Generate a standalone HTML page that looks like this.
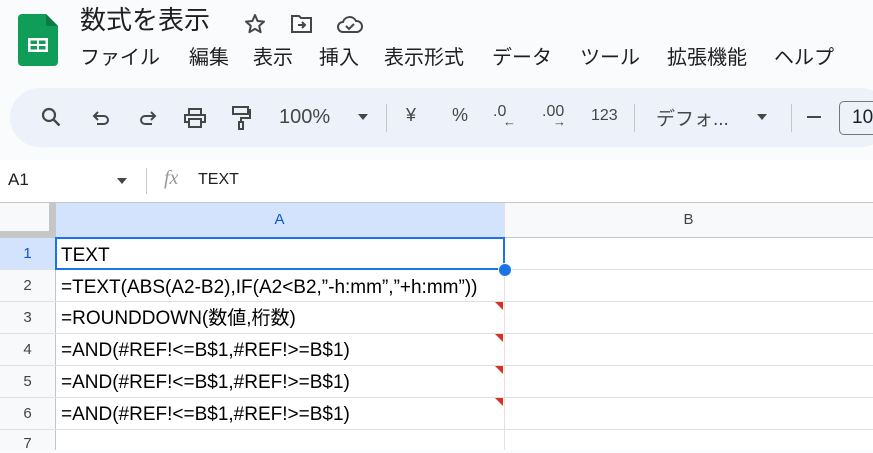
<!DOCTYPE html>
<html><head><meta charset="utf-8"><style>
*{margin:0;padding:0;box-sizing:border-box}
body{width:873px;height:450px;overflow:hidden;background:#f9fbfd;font-family:"Liberation Sans","Noto Sans CJK JP",sans-serif;position:relative;color:#1f1f1f}
.a{position:absolute;white-space:nowrap}
.title{left:80px;top:2px;font-size:26px;color:#1f1f1f;line-height:36px}
.menu{top:44px;font-size:20px;color:#1f1f1f;line-height:28px}
.tb{left:10px;top:88px;width:880px;height:59px;background:#edf2fa;border-radius:30px}
.ti{top:105px;font-size:19px;color:#444746}
.sep{width:1px;background:#c7c7c7;position:absolute}
.fb{left:0;top:160px;width:873px;height:42px;background:#fff}
.grid{left:0;top:202px;width:873px;height:248px;background:#fff}
.hl{position:absolute;background:#e1e1e1}
.cell{position:absolute;left:61px;font-size:19px;color:#000;line-height:24px}
.rn{position:absolute;width:55px;text-align:center;font-size:15px;color:#444;line-height:18px}
.tri{position:absolute;left:495px;width:0;height:0;border-top:8px solid #d93025;border-left:8px solid transparent}
</style></head><body>
<svg class="a" style="left:18px;top:14px" width="40" height="52" viewBox="0 0 40 52"><path d="M4 0h24l12 12v36a4 4 0 0 1-4 4H4a4 4 0 0 1-4-4V4a4 4 0 0 1 4-4z" fill="#0f9d58"/><path d="M28 0l12 12H30a2 2 0 0 1-2-2z" fill="#0b7a43"/><rect x="10" y="24" width="20" height="14" fill="#fff"/><rect x="12.5" y="26.5" width="6.5" height="3.5" fill="#0f9d58"/><rect x="21" y="26.5" width="6.5" height="3.5" fill="#0f9d58"/><rect x="12.5" y="32" width="6.5" height="3.5" fill="#0f9d58"/><rect x="21" y="32" width="6.5" height="3.5" fill="#0f9d58"/></svg>
<div class="a title">数式を表示</div>
<svg class="a" style="left:243px;top:12px" width="24" height="24" viewBox="0 0 24 24"><path d="M12 3l2.6 6 6.4.6-4.8 4.3 1.4 6.3L12 16.9 6.4 20.2l1.4-6.3L3 9.6l6.4-.6z" fill="none" stroke="#444746" stroke-width="2" stroke-linejoin="round"/></svg>
<svg class="a" style="left:289px;top:12px" width="26" height="24" viewBox="0 0 26 24"><path d="M3 4h7l2 2h10v14H3z" fill="none" stroke="#444746" stroke-width="2"/><path d="M9 13h7M13 10l3 3-3 3" fill="none" stroke="#444746" stroke-width="2"/></svg>
<svg class="a" style="left:336px;top:12px" width="28" height="24" viewBox="0 0 28 24"><path d="M7 20a5 5 0 0 1 0-10 7 7 0 0 1 13-1 5.5 5.5 0 0 1 1 11z" fill="none" stroke="#444746" stroke-width="2"/><path d="M10 14l3 3 5-5" fill="none" stroke="#444746" stroke-width="2"/></svg>
<div class="a menu" style="left:80px">ファイル</div>
<div class="a menu" style="left:189px">編集</div>
<div class="a menu" style="left:253px">表示</div>
<div class="a menu" style="left:319px">挿入</div>
<div class="a menu" style="left:384px">表示形式</div>
<div class="a menu" style="left:492px">データ</div>
<div class="a menu" style="left:580px">ツール</div>
<div class="a menu" style="left:667px">拡張機能</div>
<div class="a menu" style="left:774px">ヘルプ</div>
<div class="a tb"></div>
<svg class="a" style="left:40px;top:106px" width="24" height="24" viewBox="0 0 24 24"><circle cx="9" cy="9" r="6" fill="none" stroke="#444746" stroke-width="2.2"/><path d="M13.5 13.5l6 6" stroke="#444746" stroke-width="2.4"/></svg>
<svg class="a" style="left:90px;top:108px" width="22" height="22" viewBox="0 0 22 22"><path d="M5 8h9a4 4 0 0 1 0 8H7M8 4L4 8l4 4" fill="none" stroke="#444746" stroke-width="2"/></svg>
<svg class="a" style="left:137px;top:108px" width="22" height="22" viewBox="0 0 22 22"><path d="M17 8H8a4 4 0 0 0 0 8h7M14 4l4 4-4 4" fill="none" stroke="#444746" stroke-width="2"/></svg>
<svg class="a" style="left:182px;top:106px" width="26" height="24" viewBox="0 0 26 24"><path d="M7 8V3h12v5M7 16H3V9h20v7h-4M7 13h12v8H7z" fill="none" stroke="#444746" stroke-width="2"/></svg>
<svg class="a" style="left:229px;top:104px" width="24" height="28" viewBox="0 0 24 28"><path d="M4 3h15v7H4zM19 6h2v8h-9v4M10 18h4v7h-4z" fill="none" stroke="#444746" stroke-width="2"/></svg>
<div class="a ti" style="left:279px;top:106px;font-size:20px">100%</div>
<svg class="a" style="left:358px;top:114px" width="10" height="6"><path d="M0 0h10L5 6z" fill="#444746"/></svg>
<div class="sep" style="left:386px;top:104px;height:28px"></div>
<div class="a ti" style="left:406px;font-size:18px">¥</div>
<div class="a ti" style="left:452px;font-size:18px">%</div>
<div class="a ti" style="left:493px;top:103px;font-size:16px">.0</div>
<div class="a ti" style="left:503px;top:114px;font-size:13px">←</div>
<div class="a ti" style="left:542px;top:103px;font-size:16px">.00</div>
<div class="a ti" style="left:553px;top:114px;font-size:13px">→</div>
<div class="a ti" style="left:591px;top:107px;font-size:16px">123</div>
<div class="sep" style="left:634px;top:104px;height:28px"></div>
<div class="a ti" style="left:656px;top:104px;font-size:19px">デフォ...</div>
<svg class="a" style="left:757px;top:114px" width="10" height="6"><path d="M0 0h10L5 6z" fill="#444746"/></svg>
<div class="sep" style="left:791px;top:104px;height:28px"></div>
<div class="a" style="left:807px;top:116px;width:14px;height:2px;background:#444746"></div>
<div class="a" style="left:839px;top:101px;width:50px;height:34px;border:1.5px solid #747775;border-radius:5px;font-size:19px;padding:5px 0 0 12px;color:#1f1f1f">10</div>
<div class="a fb"></div>
<div class="a" style="left:8px;top:170px;font-size:17px">A1</div>
<svg class="a" style="left:117px;top:178px" width="10" height="6"><path d="M0 0h10L5 6z" fill="#444746"/></svg>
<div class="sep" style="left:146px;top:168px;height:26px"></div>
<div class="a" style="left:164px;top:167px;font-size:20px;font-style:italic;font-family:'Liberation Serif',serif;color:#999">fx</div>
<div class="a" style="left:198px;top:171px;font-size:16px">TEXT</div>
<div class="a grid"></div>
<div class="hl" style="left:0;top:202px;width:873px;height:1px;background:#c4c7c5"></div>
<div class="a" style="left:0;top:203px;width:55px;height:34px;background:#f8f9fa"></div>
<div class="a" style="left:49px;top:203px;width:6px;height:34px;background:#c4c7c5"></div>
<div class="a" style="left:0;top:231px;width:55px;height:6px;background:#c4c7c5"></div>
<div class="a" style="left:55px;top:203px;width:449px;height:34px;background:#d3e3fd;font-size:15px;text-align:center;line-height:34px;color:#0b57d0">A</div>
<div class="a" style="left:504px;top:203px;width:369px;height:34px;background:#f8f9fa;font-size:15px;text-align:center;line-height:34px;color:#444">B</div>
<div class="a" style="left:0;top:237px;width:55px;height:213px;background:#f8f9fa"></div>
<div class="a" style="left:0;top:237px;width:55px;height:33px;background:#d3e3fd"></div>
<div class="hl" style="left:55px;top:203px;width:1px;height:247px;background:#c4c7c5"></div>
<div class="hl" style="left:504px;top:203px;width:1px;height:247px"></div>
<div class="hl" style="left:0;top:237px;width:873px;height:1px;background:#c4c7c5"></div>
<div class="hl" style="left:0;top:269px;width:873px;height:1px"></div>
<div class="hl" style="left:0;top:301px;width:873px;height:1px"></div>
<div class="hl" style="left:0;top:333px;width:873px;height:1px"></div>
<div class="hl" style="left:0;top:365px;width:873px;height:1px"></div>
<div class="hl" style="left:0;top:397px;width:873px;height:1px"></div>
<div class="hl" style="left:0;top:429px;width:873px;height:1px"></div>
<div class="rn" style="top:245px;color:#0b57d0">1</div>
<div class="rn" style="top:277px">2</div>
<div class="rn" style="top:309px">3</div>
<div class="rn" style="top:341px">4</div>
<div class="rn" style="top:373px">5</div>
<div class="rn" style="top:405px">6</div>
<div class="rn" style="top:435px">7</div>
<div class="cell" style="top:244px">TEXT</div>
<div class="cell" style="top:276px">=TEXT(ABS(A2-B2),IF(A2&lt;B2,”-h:mm”,”+h:mm”))</div>
<div class="cell" style="top:307px">=ROUNDDOWN(数値,桁数)</div>
<div class="cell" style="top:339px">=AND(#REF!&lt;=B$1,#REF!&gt;=B$1)</div>
<div class="cell" style="top:371px">=AND(#REF!&lt;=B$1,#REF!&gt;=B$1)</div>
<div class="cell" style="top:403px">=AND(#REF!&lt;=B$1,#REF!&gt;=B$1)</div>
<div class="tri" style="top:302px"></div>
<div class="tri" style="top:334px"></div>
<div class="tri" style="top:366px"></div>
<div class="tri" style="top:398px"></div>
<div class="a" style="left:55px;top:237px;width:450px;height:33px;border:2px solid #1a73e8"></div>
<div class="a" style="left:498px;top:263px;width:14px;height:14px;border-radius:50%;background:#1a73e8;border:1.5px solid #fff"></div>
</body></html>
